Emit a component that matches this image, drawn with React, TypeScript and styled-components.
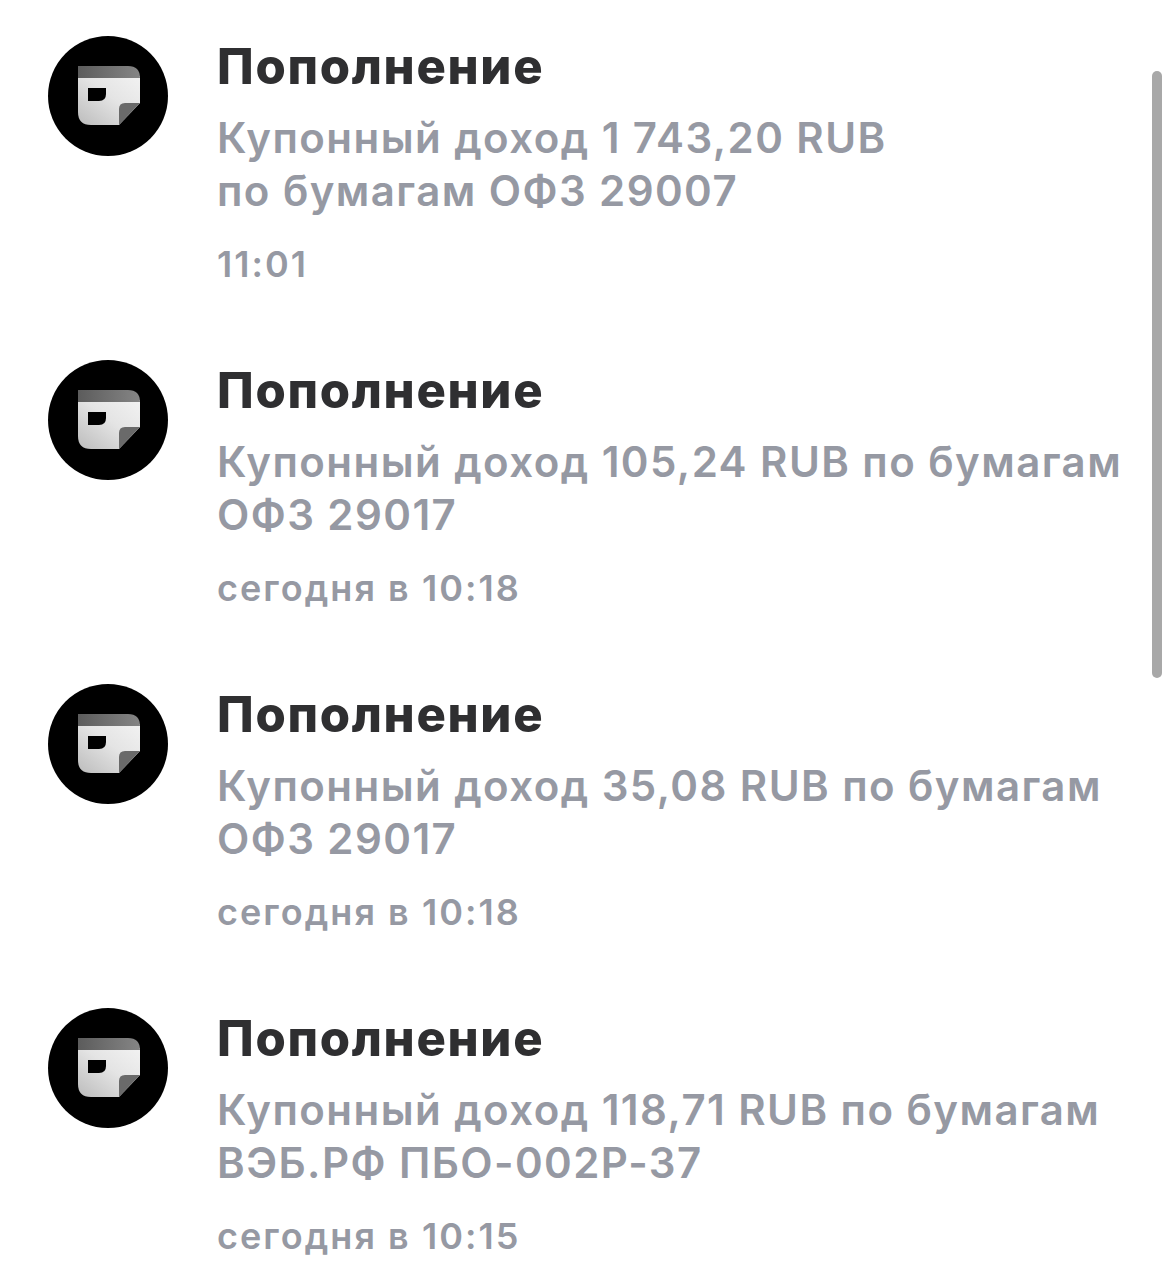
import styled, { createGlobalStyle } from 'styled-components'

interface Notice {
    id: number
    lines: string[]
    time: string
}

const notices: Notice[] = [
    { id: 1, lines: ['Купонный доход 1 743,20 RUB', 'по бумагам ОФЗ 29007'], time: '11:01' },
    { id: 2, lines: ['Купонный доход 105,24 RUB по бумагам', 'ОФЗ 29017'], time: 'сегодня в 10:18' },
    { id: 3, lines: ['Купонный доход 35,08 RUB по бумагам', 'ОФЗ 29017'], time: 'сегодня в 10:18' },
    { id: 4, lines: ['Купонный доход 118,71 RUB по бумагам', 'ВЭБ.РФ ПБО-002Р-37'], time: 'сегодня в 10:15' },
]

const GlobalStyle = createGlobalStyle`
    html, body {
        margin: 0;
        padding: 0;
        background: #fff;
        overflow: hidden;
    }
`

const Screen = styled.div`
    position: relative;
    width: 1170px;
    height: 1276px;
    overflow: hidden;
    background: #fff;
    font-family: Inter, "Noto Sans", sans-serif;
`

const List = styled.div`
    display: flex;
    flex-direction: column;
    gap: 36px;
    padding: 36px 0 0 48px;
`

const Row = styled.div`
    display: flex;
    gap: 49px;
    height: 288px;
`

const Body = styled.div`
    display: flex;
    flex-direction: column;
`

const Title = styled.div`
    font-size: 49px;
    font-weight: 800;
    line-height: 62px;
    letter-spacing: 1.7px;
    color: #2f2f31;
`

const Text = styled.div`
    margin-top: 13px;
    font-size: 42px;
    font-weight: 560;
    line-height: 53px;
    letter-spacing: 1.44px;
    color: #9699a3;
    white-space: nowrap;
`

const Time = styled.div`
    margin-top: 25px;
    font-size: 36px;
    font-weight: 560;
    line-height: 44px;
    letter-spacing: 2.05px;
    color: #9699a3;
`

const Scrollbar = styled.div`
    position: absolute;
    left: 1152px;
    top: 71px;
    width: 10px;
    height: 607px;
    border-radius: 5px;
    background: #a8a8a8;
`

function BankIcon({ id }: { id: number }) {
    const paperId = `paper-${id}`
    const bandId = `band-${id}`
    return (
        <svg width="120" height="120" viewBox="0 0 120 120" style={{ flexShrink: 0 }}>
            <defs>
                <linearGradient id={paperId} x1="0" y1="1" x2="1" y2="0">
                    <stop offset="0" stopColor="#bcbcbc" />
                    <stop offset="0.55" stopColor="#e4e4e4" />
                    <stop offset="1" stopColor="#f2f2f2" />
                </linearGradient>
                <linearGradient id={bandId} x1="0" y1="0" x2="1" y2="0">
                    <stop offset="0" stopColor="#5c5c5c" />
                    <stop offset="1" stopColor="#858585" />
                </linearGradient>
            </defs>
            <circle cx="60" cy="60" r="60" fill="#000" />
            <path d="M30 40H92V67L71 89H43Q30 89 30 76Z" fill={`url(#${paperId})`} />
            <path d="M30 30H80Q92 30 92 42H30Z" fill={`url(#${bandId})`} />
            <path d="M71 89V73Q71 67 77 67H92Z" fill="#6a6a6a" />
            <path d="M40 52H58V58Q58 65 51 65H40Z" fill="#000" />
        </svg>
    )
}

export default function App() {
    return (
        <>
            <GlobalStyle />
            <Screen>
                <List>
                    {notices.map(notice => (
                        <Row key={notice.id}>
                            <BankIcon id={notice.id} />
                            <Body>
                                <Title>Пополнение</Title>
                                <Text>
                                    {notice.lines.map(line => (
                                        <div key={line}>{line}</div>
                                    ))}
                                </Text>
                                <Time>{notice.time}</Time>
                            </Body>
                        </Row>
                    ))}
                </List>
                <Scrollbar />
            </Screen>
        </>
    )
}
